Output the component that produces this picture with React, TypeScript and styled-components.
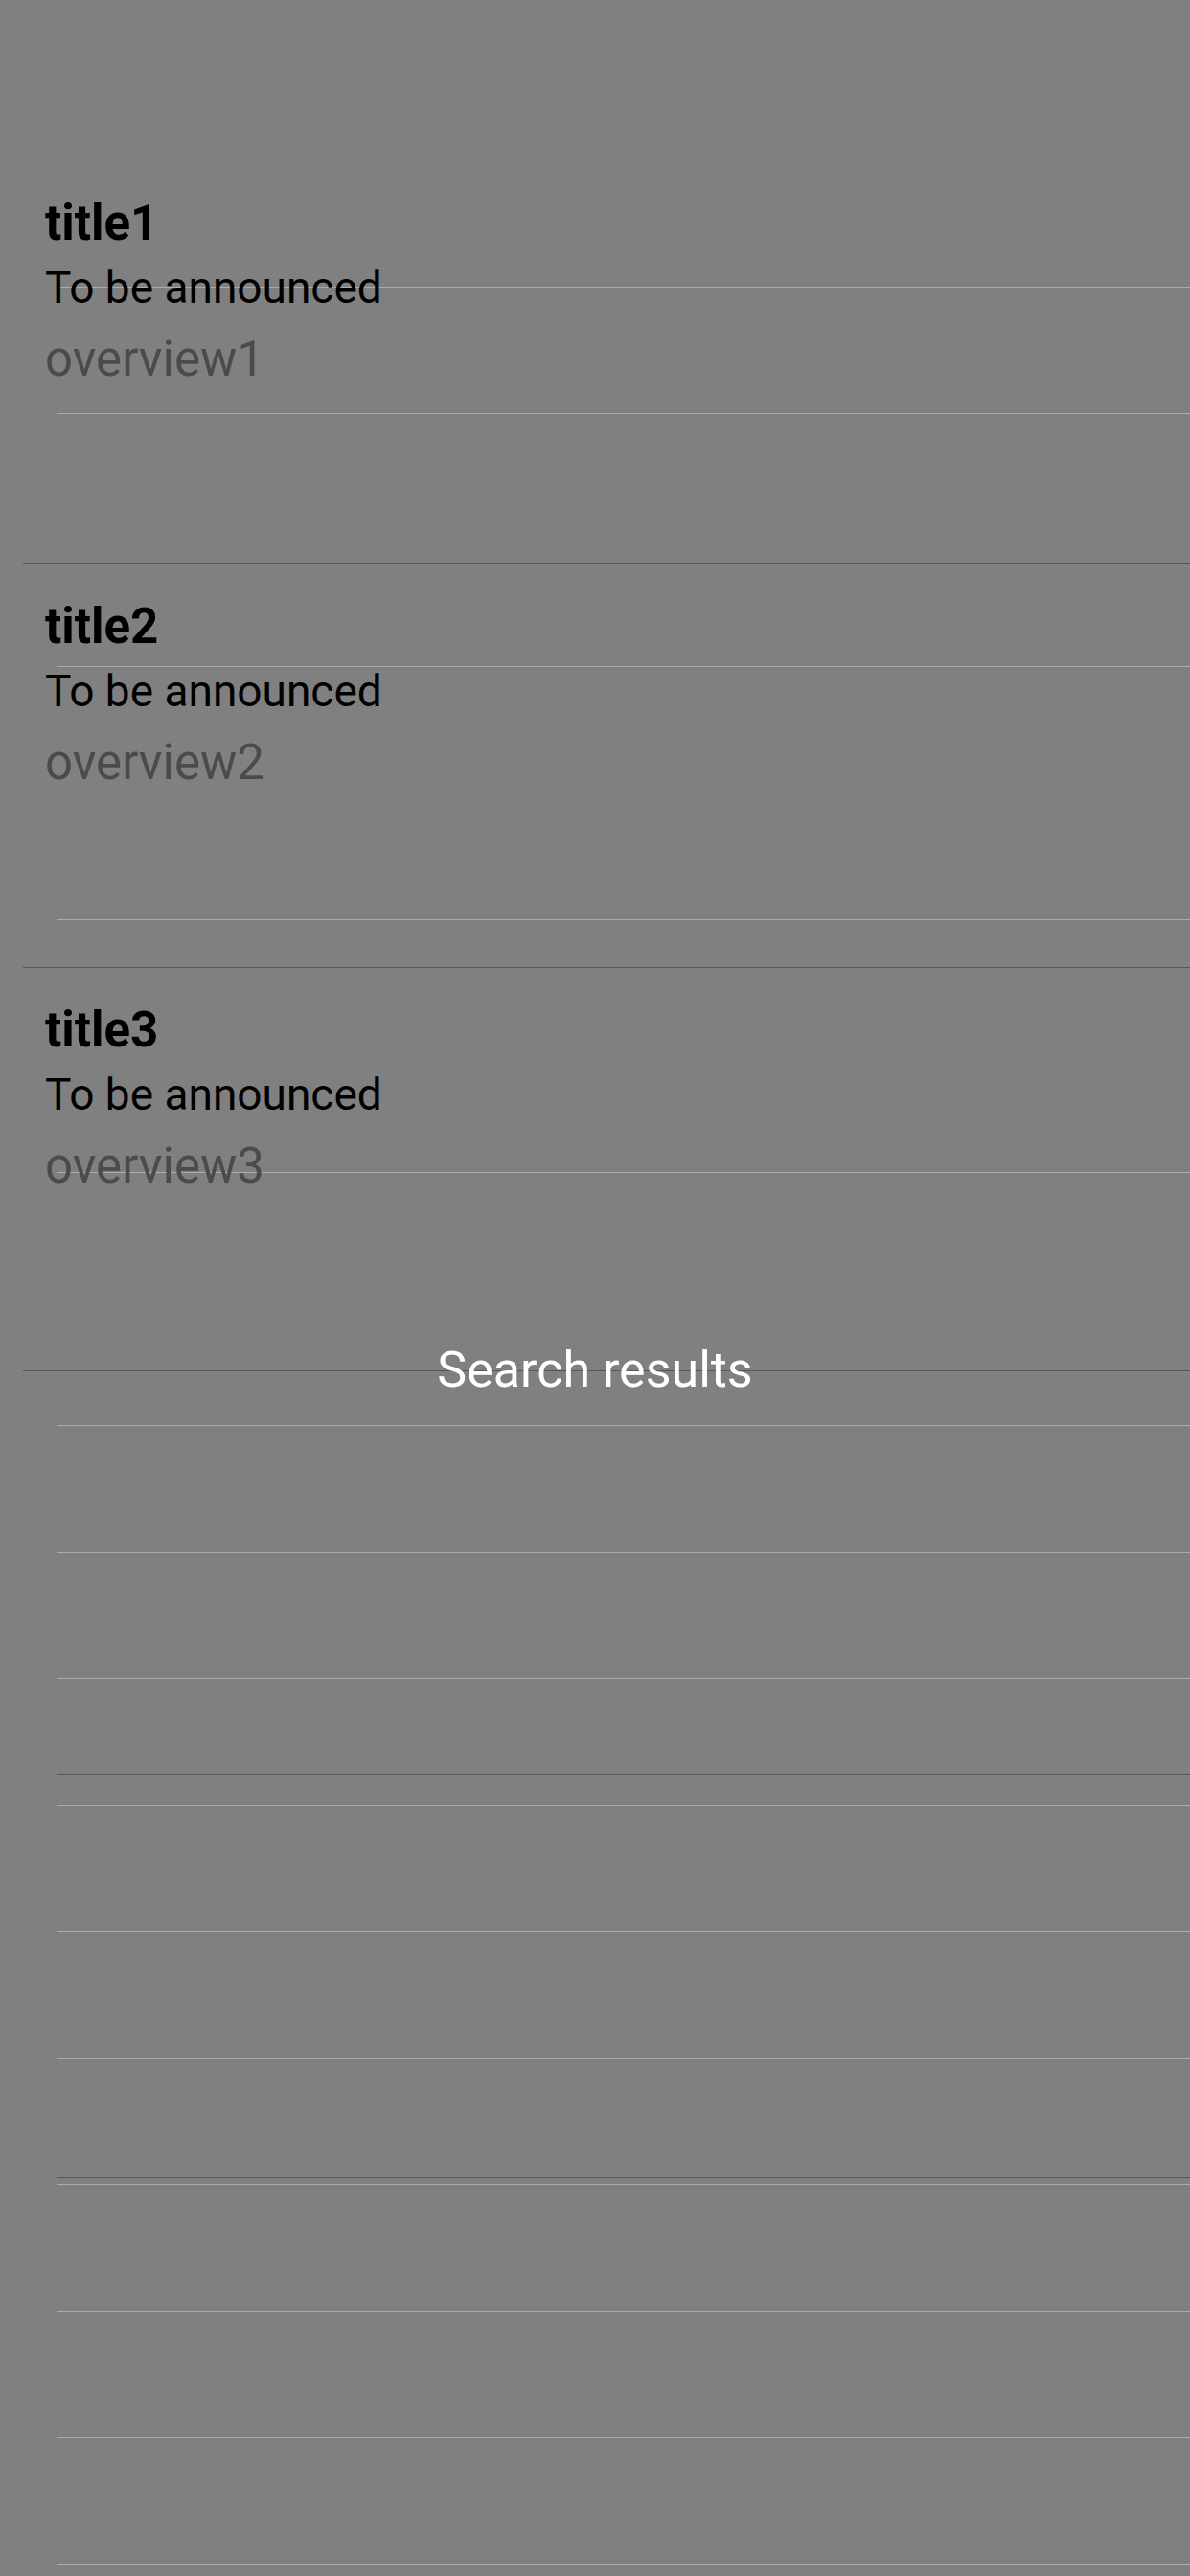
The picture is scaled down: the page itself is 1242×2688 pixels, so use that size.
import React from 'react';
import styled, { createGlobalStyle } from 'styled-components';

const GlobalStyle = createGlobalStyle`
    html, body {
        margin: 0;
        padding: 0;
        background: #808080;
    }
    body {
        font-family: Roboto, "Liberation Sans", sans-serif;
    }
`;

const Screen = styled.div`
    position: relative;
    width: 1242px;
    height: 2688px;
    overflow: hidden;
    background-color: #808080;
`;

const BackList = styled.div`
    display: flex;
    flex-direction: column;
    padding-top: 168px;
`;

const BackRow = styled.div`
    height: 132px;
    flex-shrink: 0;
    box-sizing: border-box;
    margin-left: 60px;
    border-bottom: 1px solid #acacac;
`;

const ResultsLayer = styled.div`
    position: absolute;
    top: 0;
    left: 0;
    right: 0;
    display: flex;
    flex-direction: column;
    padding-top: 168px;
`;

interface ICell {
    inset: number;
}

const Cell = styled.div<ICell>`
    position: relative;
    height: 421px;
    flex-shrink: 0;
    box-sizing: border-box;
    display: flex;
    flex-direction: column;
    padding: 35px 0 0 47px;

    &::after {
        content: '';
        position: absolute;
        left: ${(props) => props.inset}px;
        right: 0;
        bottom: 0;
        height: 1px;
        background-color: #575757;
    }
`;

const Title = styled.div`
    font-size: 51px;
    line-height: 60px;
    font-weight: 700;
    color: #000;
`;

const Subtitle = styled.div`
    margin-top: 10px;
    font-size: 46px;
    line-height: 54px;
    color: #000;
`;

const Overview = styled.div`
    margin-top: 18px;
    font-size: 51px;
    line-height: 60px;
    color: #4b4b4b;
`;

const Caption = styled.div`
    position: absolute;
    top: 1400px;
    left: 0;
    right: 0;
    text-align: center;
    font-size: 52px;
    line-height: 60px;
    color: #fff;
`;

const movies = [
    { title: 'title1', date: 'To be announced', overview: 'overview1' },
    { title: 'title2', date: 'To be announced', overview: 'overview2' },
    { title: 'title3', date: 'To be announced', overview: 'overview3' },
];

const emptyInsets = [60, 60, 60];

const App: React.FC = () => {
    return (
        <Screen>
            <GlobalStyle />
            <BackList>
                {Array.from({ length: 19 }).map((_, i) => (
                    <BackRow key={i} />
                ))}
            </BackList>
            <ResultsLayer>
                {movies.map((movie) => (
                    <Cell key={movie.title} inset={24}>
                        <Title>{movie.title}</Title>
                        <Subtitle>{movie.date}</Subtitle>
                        <Overview>{movie.overview}</Overview>
                    </Cell>
                ))}
                {emptyInsets.map((inset, i) => (
                    <Cell key={'empty' + i} inset={inset} />
                ))}
            </ResultsLayer>
            <Caption>Search results</Caption>
        </Screen>
    );
};

export default App;
